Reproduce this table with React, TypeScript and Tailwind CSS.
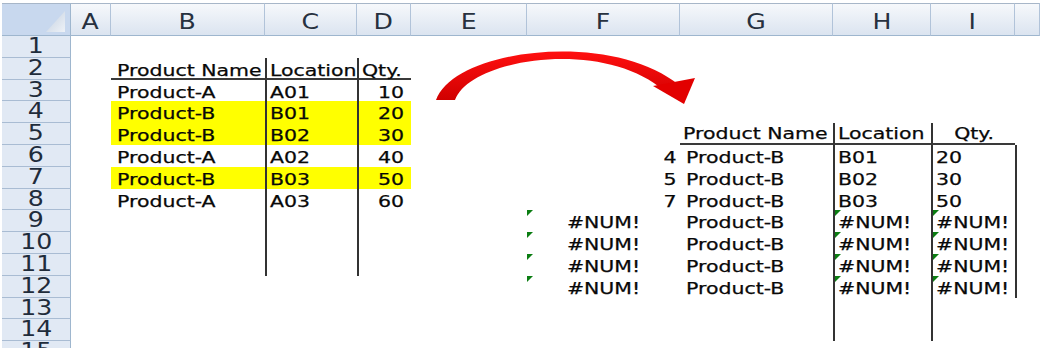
import React from "react";

type Spec = {
  t?: string;
  a?: "l" | "r" | "c";
  y?: boolean;
  bl?: boolean;
  bb?: boolean;
  tri?: boolean;
  up?: boolean;
  p?: string;
};

const COLS = ["A", "B", "C", "D", "E", "F", "G", "H", "I", ""];
const COLW = [
  "w-[40px]",
  "w-[154px]",
  "w-[92px]",
  "w-[54px]",
  "w-[116px]",
  "w-[153px]",
  "w-[153px]",
  "w-[98px]",
  "w-[84px]",
  "w-[25px]",
];
// row heights for rows 1..15 (true = 21px)
const SHORT = [false, false, true, false, false, false, false, true, false, false, false, false, true, false, false];

const data: Record<number, Record<number, Spec>> = {};
const set = (r: number, c: number, s: Spec) => {
  if (!data[r]) data[r] = {};
  data[r][c] = s;
};

// Left table
set(2, 1, { t: "Product Name", bb: true });
set(2, 2, { t: "Location", bl: true, bb: true });
set(2, 3, { t: "Qty.", bl: true, bb: true });
const left: [string, string, string, boolean][] = [
  ["Product-A", "A01", "10", false],
  ["Product-B", "B01", "20", true],
  ["Product-B", "B02", "30", true],
  ["Product-A", "A02", "40", false],
  ["Product-B", "B03", "50", true],
  ["Product-A", "A03", "60", false],
];
left.forEach(([n, l, q, y], i) => {
  const r = 3 + i;
  set(r, 1, { t: n, y });
  set(r, 2, { t: l, y, bl: true });
  set(r, 3, { t: q, y, bl: true, a: "r", p: "pr-[7px]" });
});
[9, 10, 11].forEach((r) => {
  set(r, 2, { bl: true });
  set(r, 3, { bl: true });
});

// Right table
set(5, 6, { t: "Product Name", bb: true, up: true, p: "pl-[3px]" });
set(5, 7, { t: "Location", bl: true, bb: true, up: true });
set(5, 8, { t: "Qty.", a: "c", bl: true, bb: true, up: true });
const right: [string, string, string][] = [
  ["4", "B01", "20"],
  ["5", "B02", "30"],
  ["7", "B03", "50"],
];
right.forEach(([n, l, q], i) => {
  const r = 6 + i;
  set(r, 5, { t: n, a: "r", p: "pr-[4px]" });
  set(r, 6, { t: "Product-B" });
  set(r, 7, { t: l, bl: true });
  set(r, 8, { t: q, bl: true });
  set(r, 9, { bl: true });
});
[9, 10, 11, 12].forEach((r) => {
  set(r, 5, { t: "#NUM!", a: "c", tri: true });
  set(r, 6, { t: "Product-B" });
  set(r, 7, { t: "#NUM!", bl: true, tri: true });
  set(r, 8, { t: "#NUM!", bl: true, tri: true });
  set(r, 9, { bl: true });
});
[13, 14].forEach((r) => {
  set(r, 7, { bl: true });
  set(r, 8, { bl: true });
});

function Cell({ s, w, short }: { s?: Spec; w: string; short: boolean }) {
  const a = s?.a ?? "l";
  const align = a === "r" ? "text-right" : a === "c" ? "text-center" : "text-left";
  const pad = s?.p ?? (a === "l" ? (s?.bl ? "pl-[3px]" : "pl-[6px]") : "");
  const origin = a === "r" ? "origin-right" : a === "c" ? "origin-center" : "origin-left";
  return (
    <div
      className={[
        "relative shrink-0 whitespace-nowrap",
        w,
        short ? "h-[21px]" : "h-[22px]",
        s?.y ? "bg-[#ffff00]" : "",
        s?.bl ? "border-l-2 border-l-[#333333]" : "",
        s?.bb ? "border-b-2 border-b-[#3a3a3a]" : "",
        s?.up ? "leading-[22.5px]" : "leading-[26.5px]",
        align,
        pad,
      ].join(" ")}
    >
      {s?.tri && (
        <div className="absolute left-0 top-0 h-0 w-0 border-t-[6px] border-r-[6px] border-t-[#0b7d12] border-r-transparent" />
      )}
      {s?.t && (
        <span className={`inline-block ${origin} [transform:scaleX(1.24)] [-webkit-text-stroke:0.25px_#000]`}>{s.t}</span>
      )}
    </div>
  );
}

export default function App() {
  const rows = Array.from({ length: 15 }, (_, i) => i + 1);
  return (
    <div className="relative h-[348px] w-[1040px] overflow-hidden bg-white pl-[2px] pt-[3px] font-['DejaVu_Sans',sans-serif] text-[16.5px] text-[#0a0a0a]">
      {/* column header */}
      <div className="flex h-[33px]">
        <div className="relative h-[33px] w-[69px] shrink-0 border-t border-r border-b border-t-[#a7b6c8] border-r-[#9eb6ce] border-b-[#9eb6ce] bg-[#c8d8ee]">
          <svg className="absolute left-0 top-0" width="68" height="31" viewBox="0 0 68 31">
            <defs>
              <linearGradient id="cg" x1="0" y1="0" x2="1" y2="1">
                <stop offset="0" stopColor="#c2cfdf" />
                <stop offset="1" stopColor="#eef2f7" />
              </linearGradient>
            </defs>
            <polygon points="63,7 63,28 44,28" fill="url(#cg)" />
          </svg>
        </div>
        {COLS.map((c, i) => (
          <div
            key={i}
            className={[
              "h-[33px] shrink-0 border-t border-r border-b border-t-[#a7b6c8] border-r-[#b1c3d9] border-b-[#9eb6ce] bg-linear-to-b from-[#f6f8fb] to-[#dbe4f0] text-center text-[21px] leading-[37px] text-[#27313f]",
              COLW[i],
            ].join(" ")}
          >
            {c && <span className="inline-block origin-center [transform:scaleX(1.2)]">{c}</span>}
          </div>
        ))}
      </div>
      {/* body */}
      {rows.map((r) => {
        const short = SHORT[r - 1];
        return (
          <div key={r} className="flex">
            <div
              className={[
                "w-[69px] shrink-0 border-r border-b border-r-[#9eb6ce] border-b-[#a9bcd3] bg-[#e1e9f4] text-center text-[21px] leading-[21px] text-[#1f2c3b]",
                short ? "h-[21px]" : "h-[22px]",
              ].join(" ")}
            >
              <span className="inline-block origin-center [transform:scaleX(1.2)]">{r}</span>
            </div>
            {COLW.map((w, ci) => (
              <Cell key={ci} s={data[r]?.[ci]} w={w} short={short} />
            ))}
          </div>
        );
      })}
      {/* curved arrow drawing */}
      <svg className="pointer-events-none absolute left-0 top-0" width="1040" height="348" viewBox="0 0 1040 348">
        <defs>
          <linearGradient id="ag" x1="0" y1="0" x2="0" y2="1">
            <stop offset="0" stopColor="#ff1010" />
            <stop offset="1" stopColor="#d00000" />
          </linearGradient>
        </defs>
        <path d="M436 100 C455 48 612 30 679 85 L664 91 C605 38 470 58 455 100 Z" fill="url(#ag)" />
        <path d="M653 86 L695 78 L684 104 Z" fill="#e20000" />
      </svg>
    </div>
  );
}
